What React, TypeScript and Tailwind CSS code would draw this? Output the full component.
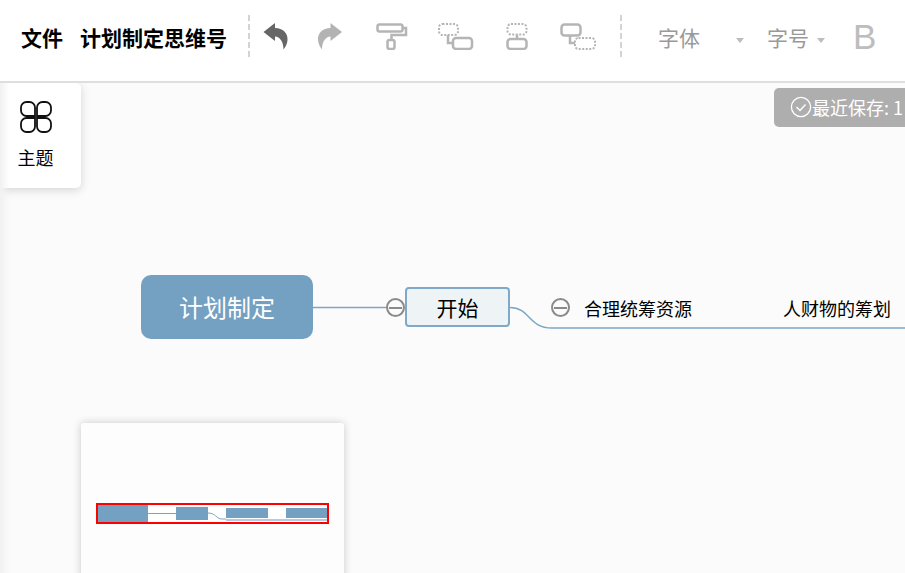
import type { ReactNode } from "react";

const font = { fontFamily: '"Noto Sans CJK SC", "Liberation Sans", sans-serif' };

function Icon({ w, h, children, className }: { w: number; h: number; children: ReactNode; className?: string }) {
  return (
    <svg width={w} height={h} viewBox={`0 0 ${w} ${h}`} fill="none" className={className}>
      {children}
    </svg>
  );
}

const gray = "#b5b5b5";
const petal = "M15 15 H6.5 A5.5 5.5 0 0 1 1 9.5 V6.5 A5.5 5.5 0 0 1 6.5 1 H9.5 A5.5 5.5 0 0 1 15 6.5 Z";

function Separator({ className }: { className: string }) {
  return <div className={`h-[42px] border-l-2 border-dashed border-[#d4d4d4] ${className}`} />;
}

function Caret({ className }: { className: string }) {
  return <div className={`mt-[9px] h-0 w-0 border-x-[4.5px] border-t-[5px] border-x-transparent border-t-[#bdbdbd] ${className}`} />;
}

function Toolbar() {
  return (
    <header className="flex h-[83px] shrink-0 items-center border-b-2 border-[#dedede] bg-white pb-[9px] pl-[21px]">
      <span className="mt-[2px] text-[21px] leading-none font-bold text-black">文件</span>
      <span className="mt-[2px] ml-[17px] text-[21px] leading-none font-bold whitespace-nowrap text-black">计划制定思维号</span>
      <Separator className="ml-[21px]" />
      <Icon w={26} h={27} className="ml-[13px]">
        <path d="M0.5 9 L12 0 V5 C20 5 25 10 24.5 17 C24.3 21 22.5 24 20.5 26.5 C20.5 19 17 13.5 12 13.5 V18 Z" fill="#666666" />
      </Icon>
      <Icon w={26} h={27} className="ml-[28px]">
        <path d="M25 9 L13.5 0 V5 C5.5 5 0.5 10 1 17 C1.2 21 3 24 5 26.5 C5 19 8.5 13.5 13.5 13.5 V18 Z" fill="#b3b3b3" />
      </Icon>
      <Icon w={32} h={27} className="ml-[33px]">
        <rect x="1.5" y="1.5" width="25" height="7" rx="2" stroke={gray} strokeWidth="2.5" />
        <path d="M27 5 H30 V12 H15.5 V17" stroke={gray} strokeWidth="2.5" />
        <rect x="11.5" y="17" width="7" height="9" rx="2" stroke={gray} strokeWidth="2.5" />
      </Icon>
      <Icon w={36} h={27} className="ml-[30px]">
        <rect x="1" y="1" width="19" height="11" rx="3.5" stroke={gray} strokeWidth="2" strokeDasharray="2 1.5" />
        <path d="M10 12 V20 H15" stroke={gray} strokeWidth="2.5" />
        <rect x="15" y="15" width="19" height="11" rx="3" stroke={gray} strokeWidth="2.5" />
      </Icon>
      <Icon w={22} h={27} className="ml-[32px]">
        <rect x="1.5" y="1" width="19" height="10.5" rx="3.5" stroke={gray} strokeWidth="2" strokeDasharray="2 1.5" />
        <path d="M11 11.5 V16" stroke={gray} strokeWidth="2.5" />
        <rect x="1.5" y="16" width="19" height="10" rx="3" stroke={gray} strokeWidth="2.5" />
      </Icon>
      <Icon w={36} h={27} className="ml-[32px]">
        <rect x="1.5" y="1.5" width="19" height="11" rx="3" stroke={gray} strokeWidth="2.5" />
        <path d="M10 12 V20 H15" stroke={gray} strokeWidth="2.5" />
        <rect x="15" y="15" width="20" height="11" rx="3.5" stroke={gray} strokeWidth="2" strokeDasharray="2 1.5" />
      </Icon>
      <Separator className="ml-[24px]" />
      <span className="mt-[2px] ml-[36px] text-[21px] leading-none text-[#999999]">字体</span>
      <Caret className="ml-[36px]" />
      <span className="mt-[2px] ml-[23px] text-[21px] leading-none text-[#999999]">字号</span>
      <Caret className="ml-[8px]" />
      <span className="ml-[28px] text-[35px] leading-none text-[#bdbdbd]" style={{ fontFamily: '"Liberation Sans", sans-serif' }}>
        B
      </span>
    </header>
  );
}

function ThemePanel() {
  return (
    <div className="absolute top-0 left-0 flex h-[105px] w-[81px] flex-col items-center rounded-r-[5px] bg-white pt-[18px] pr-[10px] shadow-[0_2px_10px_rgba(0,0,0,0.16)]">
      <Icon w={32} h={32}>
        <g stroke="#111111" strokeWidth="1.8">
          <path d={petal} />
          <path d={petal} transform="matrix(-1 0 0 1 32 0)" />
          <path d={petal} transform="matrix(1 0 0 -1 0 32)" />
          <path d={petal} transform="matrix(-1 0 0 -1 32 32)" />
        </g>
      </Icon>
      <span className="mt-[15px] text-[18px] leading-none text-black">主题</span>
    </div>
  );
}

function SaveBadge() {
  return (
    <div className="absolute top-[5px] left-[774px] flex h-[39px] w-[160px] items-center rounded-[5px] bg-[#aeaeae] pb-[2px] pl-[16px] whitespace-nowrap text-white">
      <Icon w={22} h={22}>
        <circle cx="11" cy="11" r="9.6" stroke="#ffffff" strokeWidth="1.3" />
        <path d="M6.5 11 L10 14.5 L15.5 8.5" stroke="#ffffff" strokeWidth="1.4" />
      </Icon>
      <span className="text-[18px] leading-none">最近保存: 1</span>
    </div>
  );
}

function Collapse({ x, y }: { x: string; y: string }) {
  return (
    <div className={`absolute ${x} ${y} flex h-[19px] w-[19px] items-center justify-center rounded-full border-2 border-[#8a8a8a] bg-[#fbfbfb]`}>
      <div className="h-[2px] w-[13px] shrink-0 bg-[#8a8a8a]" />
    </div>
  );
}

function MindMap() {
  return (
    <>
      <svg className="absolute top-0 left-0" width="905" height="300" fill="none">
        <path d="M313 224.5 H386" stroke="#7ba6c3" strokeWidth="1.5" />
        <path d="M510 224.5 C530 224.5 528 245 552 245 H905" stroke="#7ba6c3" strokeWidth="1.5" />
      </svg>
      <div className="absolute top-[192px] left-[141px] flex h-[64px] w-[172px] items-center justify-center rounded-[10px] bg-[#74a1c1] text-[24px] leading-none text-white">
        计划制定
      </div>
      <Collapse x="left-[386px]" y="top-[215px]" />
      <div className="absolute top-[204px] left-[405px] flex h-[40px] w-[105px] items-center justify-center rounded-[4px] border-2 border-[#7fa9c6] bg-[#eef3f6] text-[21px] leading-none text-black">
        开始
      </div>
      <Collapse x="left-[551px]" y="top-[215px]" />
      <span className="absolute top-[216px] left-[584px] text-[18px] leading-none whitespace-nowrap text-black">合理统筹资源</span>
      <span className="absolute top-[216px] left-[783px] text-[18px] leading-none whitespace-nowrap text-black">人财物的筹划</span>
    </>
  );
}

function MiniMap() {
  return (
    <div className="absolute top-[340px] left-[81px] h-[170px] w-[263px] rounded-[3px] bg-[#fdfdfd] shadow-[0_0_8px_rgba(0,0,0,0.2)]">
      <div className="absolute top-[80px] left-[15px] flex h-[21px] w-[233px] items-start border-2 border-[#ff0000] bg-white">
        <div className="h-full w-[50px] bg-[#74a1c1]" />
        <div className="mt-[8px] h-px w-[29px] bg-[#7ba6c3]" />
        <div className="mt-[2px] h-[13px] w-[32px] bg-[#74a1c1]" />
        <svg width="18" height="17" fill="none" className="shrink-0">
          <path d="M0 8 C8 8 8 14 14 14 H18" stroke="#7ba6c3" />
        </svg>
        <div className="flex w-[101px] flex-col">
          <div className="flex">
            <div className="mt-[3px] h-[10px] w-[42px] bg-[#74a1c1]" />
            <div className="w-[18px]" />
            <div className="mt-[3px] h-[10px] w-[41px] bg-[#74a1c1]" />
          </div>
          <div className="mt-px h-[2px] w-full bg-[#b4cbdd]" />
        </div>
      </div>
    </div>
  );
}

export default function App() {
  return (
    <div className="flex h-[573px] w-[905px] flex-col overflow-hidden bg-[#fbfbfb]" style={font}>
      <Toolbar />
      <main className="relative flex-1 overflow-hidden">
        <MindMap />
        <MiniMap />
        <SaveBadge />
        <ThemePanel />
        <div className="absolute inset-y-0 left-0 w-[10px] bg-gradient-to-r from-[#f1f1f1] to-transparent" />
      </main>
    </div>
  );
}
